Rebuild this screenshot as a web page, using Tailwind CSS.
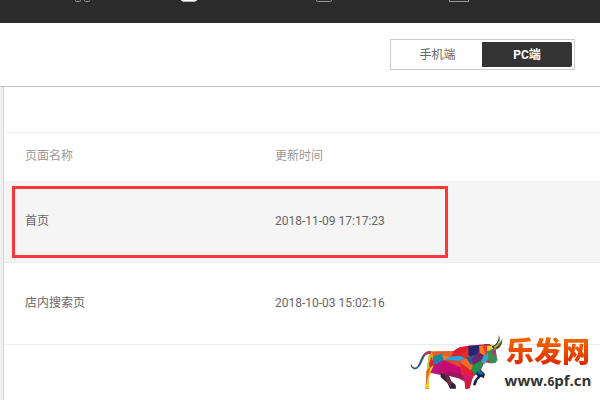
<!DOCTYPE html>
<html lang="zh-CN">

<head>
	<meta charset="utf-8">
	<meta name="viewport" content="width=device-width, initial-scale=1">
	<title>页面管理</title>
	<script src="https://cdn.jsdelivr.net/npm/@tailwindcss/browser@4"></script>
</head>

<body class="relative flex flex-col min-h-screen bg-white overflow-x-hidden font-[Roboto,'Noto_Sans_CJK_SC',sans-serif] text-xs text-[#666]">

	<!-- Top navigation -->
	<nav class="flex items-start h-[23px] pl-11 bg-[#2b2b2b]">
		<a href="#" aria-label="应用" class="flex justify-center w-[77px] shrink-0">
			<svg class="w-4 h-[3px]" viewBox="0 15 16 3" fill="none" stroke="#999">
				<rect x="0.5" y="11.5" width="5" height="5" rx="1" />
				<rect x="9.5" y="11.5" width="5" height="5" rx="1" />
			</svg>
		</a>
		<a href="#" aria-label="页面" class="flex justify-center w-[135px] shrink-0">
			<svg class="w-4 h-[3px]" viewBox="0 15 16 3">
				<rect x="1" y="2" width="14" height="15" rx="1" fill="#aab2b2" />
				<rect x="0" y="2" width="16" height="14" rx="1" fill="#fff" />
			</svg>
		</a>
		<a href="#" aria-label="模板" class="flex justify-center w-[135px] shrink-0">
			<svg class="w-4 h-[3px]" viewBox="0 15 16 3" fill="none" stroke="#999">
				<rect x="0.5" y="2.5" width="15" height="14" rx="1" />
			</svg>
		</a>
		<a href="#" aria-label="素材" class="flex justify-center w-[135px] shrink-0">
			<svg class="w-5 h-[3px]" viewBox="0 15 20 3" fill="none" stroke="#999">
				<rect x="0.5" y="2.5" width="19" height="14" />
			</svg>
		</a>
	</nav>

	<!-- Device switch -->
	<header class="flex justify-end items-start h-16 pt-4 pr-[25px] border-b border-[#c4c4c4]">
		<div class="flex w-[185px] h-[31px] p-0.5 border border-[#ccc]">
			<button type="button" class="flex-1 text-[#666]">手机端</button>
			<button type="button" class="w-[90px] h-[25px] rounded-r-xs bg-[#333] font-bold text-white">PC端</button>
		</div>
	</header>

	<main class="flex flex-1">
		<aside class="w-1 shrink-0 bg-[#f0f0f0] border-r border-[#d4d4d4]"></aside>
		<section class="flex-1 pt-[45px]">
			<table class="w-full table-fixed text-left border-t border-[#f0f0f0]">
				<thead>
					<tr class="h-12 text-[#999]">
						<th class="w-[250px] pl-[21px] pb-0.5 font-normal">页面名称</th>
						<th class="pl-[21px] pb-0.5 font-normal">更新时间</th>
					</tr>
				</thead>
				<tbody>
					<tr class="h-[82px] bg-[#f5f5f5] border-b border-[#ebebeb]">
						<td class="pl-[21px]">首页</td>
						<td class="pl-[21px]">2018-11-09 17:17:23</td>
					</tr>
					<tr class="h-[82px] border-b border-[#ebebeb]">
						<td class="pl-[21px] pb-0.5">店内搜索页</td>
						<td class="pl-[21px] pb-0.5">2018-10-03 15:02:16</td>
					</tr>
				</tbody>
			</table>
		</section>
	</main>

	<!-- Highlight around the home page row -->
	<div class="absolute left-3 top-[186px] w-[436px] h-[72px] border-3 border-[#fd3838] pointer-events-none"></div>

	<!-- Watermark -->
	<div class="absolute right-2 top-[332px] flex items-start">
		<svg class="w-[95px] h-[60px]" viewBox="30 21 285 180">
			<!-- body under the facets -->
			<path d="M96 80L163 79L182 67L211 62L255 58L282 60L290 72L293 96L289 114L275 115L256 112L246 134L222 156L212 190L199 191L198 170L178 160L150 152L124 146L96 142L88 163L90 191L79 191L84 140L88 100Z" fill="#c9264c" />
			<path d="M96 80C80 78 73 87 67 101C61 116 56 128 48 129Q41 130 36 119Q37 130 47 132C58 132 64 119 71 104C77 90 82 83 98 87Z" fill="#214e87" stroke="#214e87" stroke-width="2" />
			<path d="M97 79Q83 78 75 89L66 110L61 119L69 102Q79 84 98 86Z" fill="#d72c3d" />
			<path d="M97 80L127 78L104 91L95 124L84 142L88 103Z" fill="#f5a21d" />
			<path d="M89 88L96 91L92 140L83 145Z" fill="#b6ce32" />
			<path d="M99 80L163 79L160 94L124 94L103 98Z" fill="#ed5a28" />
			<path d="M101 96L130 85L137 105L104 123Z" fill="#1689a4" />
			<path d="M97 94L104 124L94 138L90 117Z" fill="#e3202e" />
			<path d="M82 139L96 126L106 120L88 163L91 190L79 191L84 166Z" fill="#f7d51b" />
			<path d="M82 138L95 125L88 152L82 174Z" fill="#ed5b23" />
			<path d="M105 119L135 105L125 150L94 143Z" fill="#ba1680" />
			<path d="M135 106L184 115L186 145L117 139Z" fill="#c80975" />
			<path d="M129 91L158 95L135 107Z" fill="#f37b20" />
			<path d="M124 145L147 145L157 169L170 180L171 191L153 191L145 174L125 156Z" fill="#302044" />
			<path d="M137 149L148 154L158 174L154 186L143 166Z" fill="#78303b" />
			<path d="M163 79L182 67L211 62L190 93L157 94Z" fill="#e01e2b" />
			<path d="M153 95L184 92L200 98L182 108L135 106Z" fill="#22a9df" />
			<path d="M135 106L182 108L186 128Z" fill="#ee4426" />
			<path d="M184 109L200 98L229 128L190 147Z" fill="#f36c22" />
			<path d="M187 94L207 70L222 83L220 99L201 101Z" fill="#e62f2d" />
			<path d="M208 62L250 60L242 80L219 102L208 88Z" fill="#29246c" />
			<path d="M201 98L227 89L231 105L216 119Z" fill="#225e9c" />
			<path d="M218 101L248 72L256 92L239 120L222 119Z" fill="#70266f" />
			<path d="M221 120L249 105L251 123L231 151L218 139Z" fill="#218f4d" />
			<path d="M185 113L217 138L223 157L212 167L190 150Z" fill="#e6202d" />
			<path d="M149 139L186 146L200 167L176 158L127 147Z" fill="#9d145f" />
			<path d="M193 143L218 151L210 190L199 191Z" fill="#d51a6d" />
			<path d="M202 167L216 165L212 190L200 191Z" fill="#ce2029" />
			<path d="M230 145L246 134L258 148L254 160L246 155L235 166L230 181L222 181L225 168L236 154Z" fill="#1d204f" />
			<path d="M232 139L246 137L254 150L240 148Z" fill="#196c96" />
			<path d="M240 63L261 57L266 71L256 91L242 84Z" fill="#f57c20" />
			<path d="M249 60L270 63L278 72L269 87L257 81Z" fill="#ee3a28" />
			<path d="M264 62L280 58L290 72L277 83L264 77Z" fill="#f9cf27" />
			<path d="M254 91L271 80L281 105L266 104L255 119L247 110Z" fill="#34a7c1" />
			<path d="M266 78L286 71L293 96L296 105L289 114L275 115L268 105Z" fill="#399050" />
			<path d="M277 72L289 73L290 93L280 90Z" fill="#8c4d76" />
			<path d="M254 61L280 63L270 57L258 57Z" fill="#6d367c" />
			<path d="M278 64C291 60 301 48 299 29C307 44 299 64 284 72Z" fill="#203f58" />
			<path d="M285 67Q300 61 310 40Q312 57 300 69L288 76Z" fill="#6d8e3c" />
			<path d="M284 66Q299 58 301 42Q303 55 291 66Z" fill="#f9cc2c" />
			<path d="M290 70Q303 61 309 48Q308 61 295 71Z" fill="#4c214b" />
		</svg>
		<div class="flex flex-col items-center w-[88px] gap-1">
			<span class="font-['Noto_Sans_CJK_SC',sans-serif] text-[28px] leading-9 font-black bg-linear-to-b from-[#f47200] to-[#dd1500] bg-clip-text text-transparent">乐发网</span>
			<a href="#" class="font-['Open_Sans',sans-serif] text-[15px] leading-4 font-bold text-[#333]">www.<span class="text-xs">6</span>pf.cn</a>
		</div>
	</div>

</body>

</html>
